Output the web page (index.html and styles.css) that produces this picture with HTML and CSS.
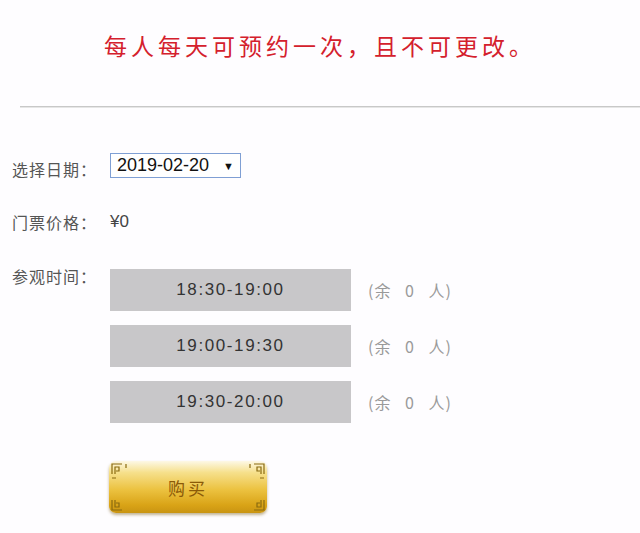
FILE: index.html
```html
<!DOCTYPE html>
<html lang="zh-CN">
<head>
<meta charset="utf-8">
<link rel="stylesheet" href="styles.css">
</head>
<body>
<div class="page">
  <h1 class="notice">每人每天可预约一次，且不可更改。</h1>
  <hr class="divider">
  <div class="form">
    <div class="row row-date">
      <span class="label">选择日期：</span>
      <div class="select"><span>2019-02-20</span><span class="arrow">▼</span></div>
    </div>
    <div class="row row-price">
      <span class="label">门票价格：</span>
      <span class="price">¥0</span>
    </div>
    <div class="row row-time">
      <span class="label">参观时间：</span>
      <div class="slots">
        <div class="slot"><div class="slot-btn">18:30-19:00</div><span class="remain">(余 0 人)</span></div>
        <div class="slot"><div class="slot-btn">19:00-19:30</div><span class="remain">(余 0 人)</span></div>
        <div class="slot"><div class="slot-btn">19:30-20:00</div><span class="remain">(余 0 人)</span></div>
      </div>
    </div>
    <div class="buy-row">
      <div class="buy">
        <svg class="corner tl" width="22" height="22" viewBox="0 0 22 22"><path d="M2 12 V2 H12 M5 12 V5 H9 V9 H6 M2 16 H6 M16 2 V6" fill="none" stroke="#8a6a10" stroke-width="1.2"/></svg>
        <svg class="corner tr" width="22" height="22" viewBox="0 0 22 22"><path d="M20 12 V2 H10 M17 12 V5 H13 V9 H16 M20 16 H16 M6 2 V6" fill="none" stroke="#8a6a10" stroke-width="1.2"/></svg>
        <svg class="corner bl" width="22" height="22" viewBox="0 0 22 22"><path d="M2 10 V20 H12 M5 10 V17 H9 V13 H6" fill="none" stroke="#8a6a10" stroke-width="1.2"/></svg>
        <svg class="corner br" width="22" height="22" viewBox="0 0 22 22"><path d="M20 10 V20 H10 M17 10 V17 H13 V13 H16" fill="none" stroke="#8a6a10" stroke-width="1.2"/></svg>
        <span class="buy-text">购买</span>
      </div>
    </div>
  </div>
</div>
</body>
</html>
```

FILE: styles.css
```css
html, body {
  margin: 0;
  padding: 0;
  background: #fefdff;
}
body {
  width: 640px;
  height: 533px;
  overflow: hidden;
  font-family: "Noto Sans CJK SC", "Noto Sans", sans-serif;
}
.page {
  padding-top: 29px;
}
.notice {
  margin: 0;
  text-align: center;
  padding-left: 0;
  font-size: 23px;
  font-weight: normal;
  letter-spacing: 4px;
  line-height: 32px;
  color: #d4202c;
}
.divider {
  margin: 45px 0 0 20px;
  border: 0;
  border-top: 1px solid #c8c8c8;
  border-bottom: 1px solid #e6e6e6;
  height: 0;
}
.form {
  padding: 45px 0 0 12px;
}
.row {
  display: flex;
  align-items: flex-start;
}
.label {
  width: 98px;
  flex: none;
  font-size: 16px;
  letter-spacing: 1px;
  color: #555;
  line-height: 24px;
}
.row-date .label {
  margin-top: 4px;
}
.select {
  display: flex;
  align-items: center;
  justify-content: space-between;
  padding: 0 6px 0 6px;
  border: 1px solid #7f9fd4;
  background: #fff;
  font-family: "Liberation Sans", "Noto Sans", sans-serif;
  font-size: 18px;
  color: #111;
  box-sizing: border-box;
  height: 25px;
  width: 131px;
}
.arrow {
  font-size: 11px;
  color: #111;
}
.row-price {
  margin-top: 29px;
  align-items: center;
}
.price {
  font-family: "Liberation Sans", "Noto Sans", sans-serif;
  font-size: 17px;
  color: #444;
}
.row-time {
  margin-top: 35px;
}
.row-time .label {
  margin-top: -5px;
}
.slots {
  display: flex;
  flex-direction: column;
  gap: 14px;
}
.slot {
  display: flex;
  align-items: center;
  gap: 17px;
}
.slot-btn {
  width: 241px;
  height: 42px;
  background: #c8c7c9;
  display: flex;
  align-items: center;
  justify-content: center;
  font-family: "Liberation Sans", "Noto Sans", sans-serif;
  font-size: 17px;
  letter-spacing: 1.6px;
  color: #333;
}
.remain {
  font-size: 16px;
  color: #9a9a9a;
  word-spacing: 9px;
  letter-spacing: 1px;
}
.buy-row {
  padding: 38px 0 0 97px;
}
.buy {
  position: relative;
  width: 158px;
  height: 52px;
  border-radius: 7px;
  background: linear-gradient(to bottom, #fdf8e6 0%, #f6e08c 22%, #ecc240 55%, #d9a316 85%, #c99412 100%);
  box-shadow: 0 2px 3px rgba(120, 90, 20, 0.45);
  display: flex;
  align-items: center;
  justify-content: center;
}
.buy-text {
  font-size: 17px;
  color: #8b5a08;
  letter-spacing: 3px;
}
.corner {
  position: absolute;
}
.corner.tl { left: 1px; top: 1px; }
.corner.tr { right: 1px; top: 1px; }
.corner.bl { left: 1px; bottom: 1px; }
.corner.br { right: 1px; bottom: 1px; }
```
